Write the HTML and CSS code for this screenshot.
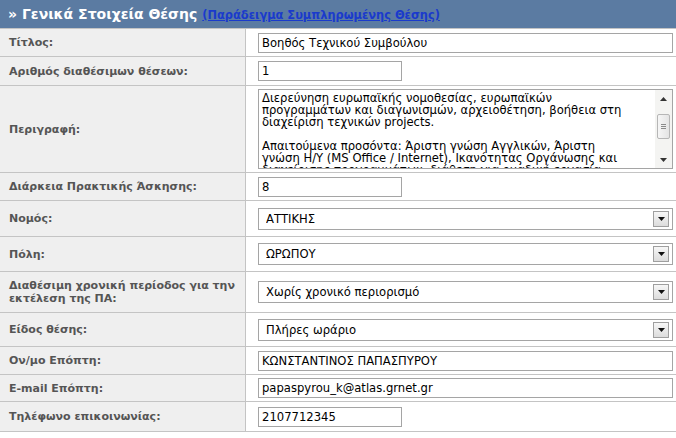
FILE: index.html
```html
<!DOCTYPE html>
<html lang="el">
<head>
<meta charset="utf-8">
<title>Γενικά Στοιχεία Θέσης</title>
<link rel="stylesheet" href="styles.css">
</head>
<body>
<div class="panel">
  <div class="head">
    <span class="head-title">» Γενικά Στοιχεία Θέσης</span>
    <a class="head-link" href="#">(Παράδειγμα Συμπληρωμένης Θέσης)</a>
  </div>

  <div class="row row-text">
    <div class="label">Τίτλος:</div>
    <div class="value"><input class="inp inp-wide" type="text" value="Βοηθός Τεχνικού Συμβούλου"></div>
  </div>

  <div class="row row-text2">
    <div class="label">Αριθμός διαθέσιμων θέσεων:</div>
    <div class="value"><input class="inp inp-short" type="text" value="1"></div>
  </div>

  <div class="row row-desc">
    <div class="label">Περιγραφή:</div>
    <div class="value">
      <div class="ta-wrap">
        <textarea class="ta" wrap="off">Διερεύνηση ευρωπαϊκής νομοθεσίας, ευρωπαϊκών
προγραμμάτων και διαγωνισμών, αρχειοθέτηση, βοήθεια στη
διαχείριση τεχνικών projects.

Απαιτούμενα προσόντα: Άριστη γνώση Αγγλικών, Άριστη
γνώση H/Y (MS Office / Internet), Ικανότητας Οργάνωσης και
διαχείρισης προγραμμάτων, διάθεση για ομαδική εργασία.</textarea>
        <div class="sb">
          <div class="sb-btn"><svg width="7" height="4" viewBox="0 0 7 4"><path d="M0 4 L3.5 0 L7 4 Z" fill="#333"/></svg></div>
          <div class="sb-track">
            <div class="sb-thumb"><span></span><span></span><span></span></div>
          </div>
          <div class="sb-btn"><svg width="7" height="4" viewBox="0 0 7 4"><path d="M0 0 L7 0 L3.5 4 Z" fill="#333"/></svg></div>
        </div>
      </div>
    </div>
  </div>

  <div class="row row-text">
    <div class="label">Διάρκεια Πρακτικής Άσκησης:</div>
    <div class="value"><input class="inp inp-short" type="text" value="8"></div>
  </div>

  <div class="row row-sel1">
    <div class="label">Νομός:</div>
    <div class="value">
      <div class="sel-wrap">
        <select class="sel"><option>ΑΤΤΙΚΗΣ</option></select>
        <span class="sel-btn"><svg width="7" height="4" viewBox="0 0 7 4"><path d="M0 0 L7 0 L3.5 4 Z" fill="#111"/></svg></span>
      </div>
    </div>
  </div>

  <div class="row row-sel2">
    <div class="label">Πόλη:</div>
    <div class="value">
      <div class="sel-wrap">
        <select class="sel"><option>ΩΡΩΠΟΥ</option></select>
        <span class="sel-btn"><svg width="7" height="4" viewBox="0 0 7 4"><path d="M0 0 L7 0 L3.5 4 Z" fill="#111"/></svg></span>
      </div>
    </div>
  </div>

  <div class="row row-tall">
    <div class="label">Διαθέσιμη χρονική περίοδος για την εκτέλεση της ΠΑ:</div>
    <div class="value">
      <div class="sel-wrap">
        <select class="sel"><option>Χωρίς χρονικό περιορισμό</option></select>
        <span class="sel-btn"><svg width="7" height="4" viewBox="0 0 7 4"><path d="M0 0 L7 0 L3.5 4 Z" fill="#111"/></svg></span>
      </div>
    </div>
  </div>

  <div class="row row-sel3">
    <div class="label">Είδος θέσης:</div>
    <div class="value">
      <div class="sel-wrap">
        <select class="sel"><option>Πλήρες ωράριο</option></select>
        <span class="sel-btn"><svg width="7" height="4" viewBox="0 0 7 4"><path d="M0 0 L7 0 L3.5 4 Z" fill="#111"/></svg></span>
      </div>
    </div>
  </div>

  <div class="row row-text">
    <div class="label">Ον/μο Επόπτη:</div>
    <div class="value"><input class="inp inp-wide" type="text" value="ΚΩΝΣΤΑΝΤΙΝΟΣ ΠΑΠΑΣΠΥΡΟΥ"></div>
  </div>

  <div class="row row-text3">
    <div class="label">E-mail Επόπτη:</div>
    <div class="value"><input class="inp inp-wide" type="text" value="papaspyrou_k@atlas.grnet.gr"></div>
  </div>

  <div class="row row-last">
    <div class="label">Τηλέφωνο επικοινωνίας:</div>
    <div class="value"><input class="inp inp-short" type="text" value="2107712345"></div>
  </div>
</div>
</body>
</html>
```

FILE: styles.css
```css
html, body {
  margin: 0;
  padding: 0;
  background: #ffffff;
}

body {
  font-family: "DejaVu Sans", Verdana, sans-serif;
}

.panel {
  width: 680px;
}

.head {
  height: 28px;
  background: #5b7ba2;
  display: flex;
  align-items: center;
  padding-left: 8px;
  gap: 5px;
  box-sizing: border-box;
}

.head-title {
  color: #ffffff;
  font-weight: bold;
  font-size: 14px;
}

.head-link {
  color: #1a3acc;
  font-weight: bold;
  font-size: 11.4px;
  text-decoration: underline;
  padding-top: 2px;
}

.row {
  box-sizing: border-box;
  display: grid;
  grid-template-columns: 246px 1fr;
  border-top: 1px solid #c4c4c4;
}

.row-text { height: 28px; }
.row-text2 { height: 29px; }
.row-text3 { height: 27px; }
.row-desc { height: 87px; }
.row-sel1 { height: 36px; }
.row-sel2 { height: 35px; }
.row-sel3 { height: 34px; }
.row-tall { height: 41px; }
.row-last {
  height: 31px;
  border-bottom: 1px solid #c4c4c4;
}

.label {
  background: #efefef;
  border-right: 1px solid #c4c4c4;
  color: #555555;
  font-weight: bold;
  font-size: 11px;
  line-height: 13px;
  padding: 0 6px 0 9px;
  display: flex;
  align-items: center;
}

.value {
  display: flex;
  align-items: center;
  padding-left: 12px;
}

.inp {
  box-sizing: border-box;
  height: 20px;
  border: 1px solid #a5a5a5;
  padding: 0 3px;
  font-family: "DejaVu Sans", Verdana, sans-serif;
  font-size: 11.6px;
  color: #000;
  background: #fff;
  outline: none;
}

.inp-wide { width: 415px; }
.inp-short { width: 144px; }

.ta-wrap {
  position: relative;
  width: 415px;
  height: 80px;
}

.ta {
  box-sizing: border-box;
  width: 100%;
  height: 100%;
  border: 1px solid #a5a5a5;
  padding: 2px 20px 2px 3px;
  font-family: "DejaVu Sans", Verdana, sans-serif;
  font-size: 11.6px;
  line-height: 12px;
  color: #000;
  resize: none;
  overflow: hidden;
  outline: none;
  display: block;
}

.sb {
  position: absolute;
  top: 1px;
  right: 1px;
  bottom: 1px;
  width: 17px;
  background: #f4f4f2;
  display: flex;
  flex-direction: column;
}

.sb-btn {
  height: 17px;
  display: flex;
  align-items: center;
  justify-content: center;
}

.sb-track {
  flex: 1;
  padding-top: 7px;
  display: flex;
  justify-content: center;
}

.sb-thumb {
  box-sizing: border-box;
  width: 13px;
  height: 25px;
  border: 1px solid #b6b6b6;
  border-radius: 2px;
  background: linear-gradient(90deg, #f6f6f6, #e4e4e4);
  display: flex;
  flex-direction: column;
  align-items: center;
  justify-content: center;
  gap: 1px;
}

.sb-thumb span {
  display: block;
  width: 5px;
  height: 1px;
  background: #8a8a8a;
}

.sel-wrap {
  position: relative;
  width: 415px;
  height: 22px;
}

.sel {
  appearance: none;
  -webkit-appearance: none;
  box-sizing: border-box;
  width: 100%;
  height: 100%;
  border: 1px solid #a5a5a5;
  border-radius: 0;
  background: #fff;
  padding: 0 7px;
  font-family: "DejaVu Sans", Verdana, sans-serif;
  font-size: 11.6px;
  color: #000;
  outline: none;
}

.sel-btn {
  position: absolute;
  top: 3px;
  right: 4px;
  width: 16px;
  height: 16px;
  box-sizing: border-box;
  border: 1px solid #9f9f9f;
  background: linear-gradient(#f7f7f7, #dcdcdc);
  display: flex;
  align-items: center;
  justify-content: center;
}
```
